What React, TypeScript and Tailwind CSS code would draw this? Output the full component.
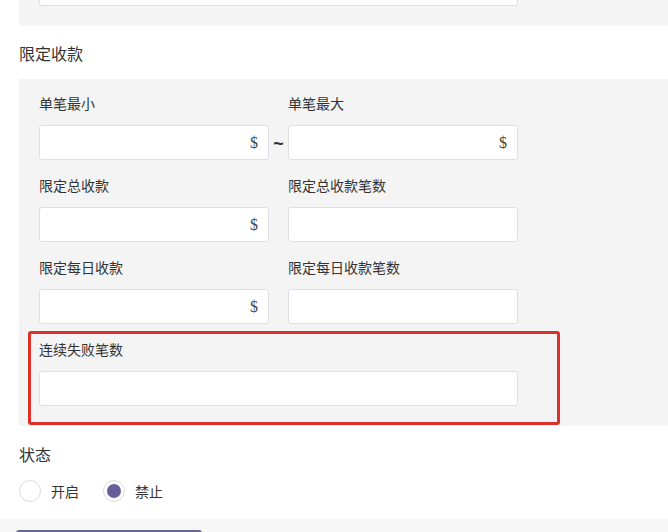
import React from 'react';

const font = { fontFamily: '"Noto Sans CJK SC", "Liberation Sans", sans-serif' };

const Field = ({ label, dollar, wide }: { label: string; dollar?: boolean; wide?: boolean }) => (
  <div className="flex flex-col">
    <label className="h-5 mb-3 text-[14px] leading-5 text-[#333]">{label}</label>
    <div
      className={`h-[35px] ${wide ? 'w-[479px]' : 'w-[230px]'} bg-white border border-[#dcdfe6] rounded-[3px] flex items-center justify-end pr-[10px]`}
    >
      {dollar && <span className="text-[16px] text-[#444]" style={{ fontFamily: '"Liberation Serif", serif' }}>$</span>}
    </div>
  </div>
);

const App = () => {
  return (
    <div className="w-[668px] h-[532px] overflow-hidden bg-white" style={font}>
      {/* previous section, cut off */}
      <div className="ml-[19px] h-[26px] bg-[#f4f4f5] pl-[20px]">
        <div className="w-[479px] h-[6px] bg-white border border-t-0 border-[#dcdfe6] rounded-b-[3px]" />
      </div>

      <div className="h-[53px] flex items-center pl-[19px] text-[16px] text-[#333]">限定收款</div>

      <div className="ml-[19px] bg-[#f4f4f5] pl-[20px] pt-[14px] pb-px">
        <div className="flex flex-col gap-[15px]">
          <div className="flex">
            <Field label="单笔最小" dollar />
            <div className="w-[19px] pt-[32px]">
              <div className="h-[35px] flex items-center justify-center pt-[4px] text-[18px] font-bold text-[#333]" style={{ fontFamily: '"Liberation Sans", sans-serif' }}>~</div>
            </div>
            <Field label="单笔最大" dollar />
          </div>
          <div className="flex gap-[19px]">
            <Field label="限定总收款" dollar />
            <Field label="限定总收款笔数" />
          </div>
          <div className="flex gap-[19px]">
            <Field label="限定每日收款" dollar />
            <Field label="限定每日收款笔数" />
          </div>
        </div>
        <div className="mt-[7px] -ml-[11px] w-[532px] border-[3px] border-[#dc312a] rounded-[3px] pl-[8px] pt-[5px] pb-[16px]">
          <Field label="连续失败笔数" wide />
        </div>
      </div>

      <div className="pl-[19px] pt-[18px]">
        <div className="text-[16px] leading-5 text-[#333]">状态</div>
        <div className="mt-[16px] flex items-center text-[14px] text-[#333]">
          <span className="w-[22px] h-[22px] rounded-full border border-[#dcdcdc] bg-white" />
          <span className="ml-[10px]">开启</span>
          <span className="ml-[24px] w-[22px] h-[22px] rounded-full border border-[#dcdcdc] bg-white flex items-center justify-center">
            <span className="w-[14px] h-[14px] rounded-full bg-[#675f9a]" />
          </span>
          <span className="ml-[10px]">禁止</span>
        </div>
      </div>

      <div className="mt-[17px] h-[20px] bg-[#f7f7f8] pt-[11px] pl-[16px]">
        <div className="w-[186px] h-[20px] bg-[#6b6496] rounded-t-[3px]" />
      </div>
    </div>
  );
};

export default App;
